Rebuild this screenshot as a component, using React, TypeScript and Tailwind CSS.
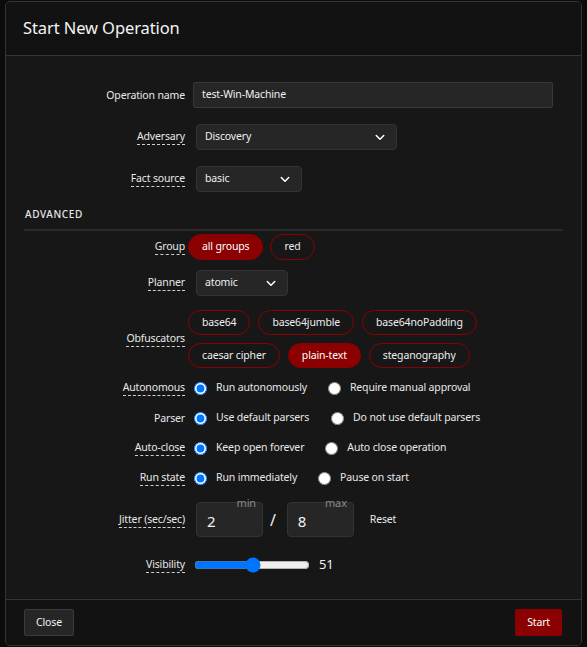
import { useState } from "react";

const RED = "#8b0000";

const Chevron = () => (
	<svg width="12" height="12" viewBox="0 0 16 16" fill="none" stroke="#fff" strokeWidth="2" strokeLinecap="round" strokeLinejoin="round">
		<path d="M3 6l5 5 5-5" />
	</svg>
);

function Label({ text, dashed = true, className = "" }: { text: string; dashed?: boolean; className?: string }) {
	return (
		<div className={`flex w-[161px] shrink-0 justify-end ${className}`}>
			<span className={dashed ? "border-b border-dashed border-[#cfcfcf] pb-px leading-[14px]" : "leading-[14px]"}>{text}</span>
		</div>
	);
}

function Select({ value, width }: { value: string; width: string }) {
	return (
		<div className={`ml-[11px] flex h-[26px] items-center justify-between rounded-[4px] border border-[#333] bg-[#262626] pl-2 pr-[10px] text-[#eee] ${width}`}>
			<span>{value}</span>
			<Chevron />
		</div>
	);
}

function Pill({ text, active = false, h = "h-[26px]" }: { text: string; active?: boolean; h?: string }) {
	return (
		<button
			type="button"
			className={`${h} rounded-full border border-[#8b0000] px-[13px] ${active ? "bg-[#8b0000] text-white" : "bg-transparent text-[#eee]"}`}
		>
			{text}
		</button>
	);
}

function RadioRow({
	label,
	dashed = true,
	name,
	options,
	gap,
}: {
	label: string;
	dashed?: boolean;
	name: string;
	options: [string, string];
	gap: string;
}) {
	const [value, setValue] = useState(0);
	return (
		<div className="flex h-5 items-center">
			<Label text={label} dashed={dashed} />
			<label className="ml-[9px] flex items-center">
				<input type="radio" name={name} checked={value === 0} onChange={() => setValue(0)} className="m-0 h-[13px] w-[13px]" />
				<span className="ml-[9px]">{options[0]}</span>
			</label>
			<label className={`flex items-center ${gap}`}>
				<input type="radio" name={name} checked={value === 1} onChange={() => setValue(1)} className="m-0 h-[13px] w-[13px]" />
				<span className="ml-[9px]">{options[1]}</span>
			</label>
		</div>
	);
}

function JitterBox({ value, hint }: { value: string; hint: string }) {
	return (
		<div className="relative h-[35px] w-[67px] rounded-[4px] border border-[#333] bg-[#262626]">
			<span className="absolute right-[6px] top-[-8px] text-[11px] text-[#8a8a8a]">{hint}</span>
			<span className="absolute left-[10px] top-[7px] text-[15px] text-[#f2f2f2]">{value}</span>
		</div>
	);
}

export default function App() {
	const [visibility, setVisibility] = useState(51);
	return (
		<div
			className="h-[647px] w-[587px] bg-[#0c0c0c] pl-[5px] pt-px text-[10.5px] tracking-[-0.15px] text-[#e8e8e8]"
			style={{ fontFamily: '"Noto Sans", "Open Sans", sans-serif' }}
		>
			<div className="flex h-[645px] w-[577px] flex-col overflow-hidden rounded-[5px] border border-[#353535] bg-[#171717]">
				<header className="flex h-[54px] shrink-0 items-center border-b border-[#353535] bg-[#121212] pl-[17px]">
					<h1 className="text-[16.5px] tracking-[-0.1px] text-[#f4f4f4]">Start New Operation</h1>
				</header>

				<div className="flex flex-1 flex-col px-[18px] pt-[26px]">
					<div className="flex h-[26px] items-center">
						<Label text="Operation name" dashed={false} />
						<div className="ml-2 flex h-[26px] w-[360px] items-center rounded-[2px] border border-[#383838] bg-[#262626] px-2 text-[#f0f0f0]">
							test-Win-Machine
						</div>
					</div>

					<div className="mt-4 flex h-[26px] items-center">
						<Label text="Adversary" />
						<Select value="Discovery" width="w-[201px]" />
					</div>

					<div className="mt-4 flex h-[26px] items-center">
						<Label text="Fact source" />
						<Select value="basic" width="w-[106px]" />
					</div>

					<div className="mt-[15px] border-b-2 border-[#2a2a2a] pb-[7px] pl-px text-[10px] font-medium tracking-[0.06em] text-[#e6e6e6]">
						ADVANCED
					</div>

					<div className="mt-[3px] flex h-[26px] items-center">
						<Label text="Group" />
						<div className="ml-[3px] flex gap-[7px]">
							<Pill text="all groups" active />
							<Pill text="red" />
						</div>
					</div>

					<div className="mt-[10px] flex h-[26px] items-center">
						<Label text="Planner" />
						<Select value="atomic" width="w-[92px]" />
					</div>

					<div className="mt-[14px] flex items-center">
						<Label text="Obfuscators" />
						<div className="ml-[3px] flex flex-col gap-[8px]">
							<div className="flex gap-2">
								<Pill text="base64" h="h-[25px]" />
								<Pill text="base64jumble" h="h-[25px]" />
								<Pill text="base64noPadding" h="h-[25px]" />
							</div>
							<div className="flex gap-2">
								<Pill text="caesar cipher" h="h-[25px]" />
								<Pill text="plain-text" active h="h-[25px]" />
								<Pill text="steganography" h="h-[25px]" />
							</div>
						</div>
					</div>

					<div className="mt-[10px] flex flex-col gap-[10px]">
						<RadioRow label="Autonomous" name="auto" options={["Run autonomously", "Require manual approval"]} gap="ml-[21px]" />
						<RadioRow label="Parser" dashed={false} name="parser" options={["Use default parsers", "Do not use default parsers"]} gap="ml-[22px]" />
						<RadioRow label="Auto-close" name="close" options={["Keep open forever", "Auto close operation"]} gap="ml-[21px]" />
						<RadioRow label="Run state" name="state" options={["Run immediately", "Pause on start"]} gap="ml-[21px]" />
					</div>

					<div className="mt-[14px] flex items-center">
						<Label text="Jitter (sec/sec)" />
						<div className="ml-[11px] flex items-center">
							<JitterBox value="2" hint="min" />
							<span className="ml-[7px] mr-[11px] text-[16px] text-[#eee]">/</span>
							<JitterBox value="8" hint="max" />
							<span className="ml-[16px]">Reset</span>
						</div>
					</div>

					<div className="mt-[18px] flex h-5 items-center">
						<Label text="Visibility" />
						<input
							type="range"
							min={0}
							max={100}
							value={visibility}
							onChange={(e) => setVisibility(Number(e.target.value))}
							className="ml-[9px] w-[116px]"
						/>
						<span className="ml-[9px] text-[13px] text-[#f2f2f2]">{visibility}</span>
					</div>
				</div>

				<footer className="flex h-[46px] shrink-0 items-center justify-between border-t border-[#353535] bg-[#121212] px-[18px]">
					<button type="button" className="h-[27px] rounded-[2px] border border-[#3c3c3c] bg-[#262626] px-[11px] text-[#f2f2f2]">
						Close
					</button>
					<button type="button" className="mr-px h-[27px] rounded-[2px] px-[12px] text-white" style={{ backgroundColor: RED }}>
						Start
					</button>
				</footer>
			</div>
		</div>
	);
}
